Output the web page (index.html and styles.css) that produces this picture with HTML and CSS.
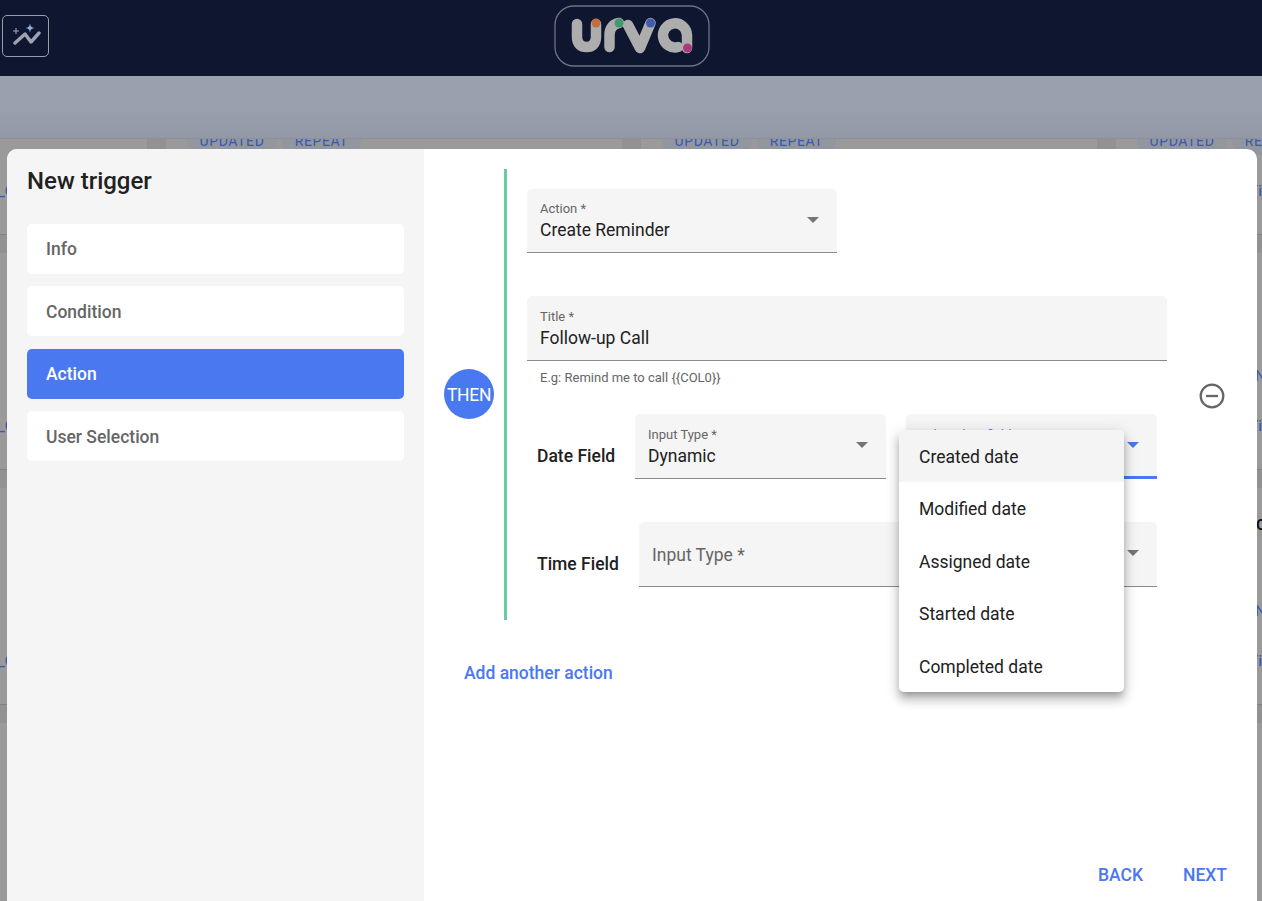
FILE: index.html
```
<!DOCTYPE html>
<html lang="en">
<head>
<meta charset="utf-8">
<title>New trigger</title>
<link rel="stylesheet" href="styles.css">
</head>
<body>
<header class="topbar">
  <button class="spark-btn" type="button" aria-label="Insights">
    <svg width="30" height="26" viewBox="0 0 30 26" class="spark-icon">
      <path d="M4 20 L14 11 L20 19 L28 10" fill="none" stroke="#9ea3b4" stroke-width="3.4" stroke-linecap="round" stroke-linejoin="round"/>
      <path d="M5 5v6M2 8h6" stroke="#8fa4c8" stroke-width="1.1" fill="none"/>
      <path d="M19 0.500 C19.500 3.500 20.500 4.500 23.500 5 C20.500 5.500 19.500 6.500 19 9.500 C18.500 6.500 17.500 5.500 14.500 5 C17.500 4.500 18.500 3.500 19 0.500Z" fill="#8fb0dc"/>
    </svg>
  </button>
  <div class="logo">
    <svg width="156" height="62" viewBox="0 0 156 62">
      <rect x="1" y="1" width="154" height="60" rx="19" fill="none" stroke="#6f7280" stroke-width="1.3"/>
      <g fill="none" stroke="#adadad" stroke-width="10.500" stroke-linecap="round" stroke-linejoin="round">
        <path d="M23 19 V32 C23 39 27 42 32.500 42 C38 42 42 39 42 32 V19"/>
        <path d="M55.500 42 V30 C55.500 23 59 19 65 18"/>
        <path d="M74 20 L86 43 L96.500 18"/>
        <path d="M124 42 A12 12 0 1 1 133 30 V43"/>
      </g>
      <circle cx="42" cy="18" r="4.500" fill="#bf6d41"/>
      <circle cx="65" cy="18" r="4.500" fill="#3f9a6f"/>
      <circle cx="96.500" cy="18" r="4.500" fill="#3e5cb0"/>
      <circle cx="133.500" cy="43" r="4.500" fill="#a83a7c"/>
    </svg>
  </div>
</header>

<div class="scrim-band"></div>

<main class="board">
  <section class="col">
    <div class="card"><div class="chips"><span class="chip">UPDATED</span><span class="chip">REPEAT</span></div><p class="ref ref-left">L_C</p></div>
    <div class="card"><p class="ref ref-left">L_C</p></div>
    <div class="card"><p class="ref ref-left">L_C</p></div>
    <div class="card"></div>
  </section>
  <section class="col">
    <div class="card"><div class="chips"><span class="chip">UPDATED</span><span class="chip">REPEAT</span></div></div>
  </section>
  <section class="col">
    <div class="card"><div class="chips"><span class="chip">UPDATED</span><span class="chip">REPEAT</span></div></div>
  </section>
  <section class="col">
    <div class="card"><div class="chips"><span class="chip">UPDATED</span><span class="chip">REPEAT</span></div><p class="ref">Ti</p></div>
    <div class="card"><p class="vee">N</p><p class="ref">Ti</p></div>
    <div class="card"><p class="oh">Ob</p><p class="vee">N</p><p class="ref">Ti</p></div>
    <div class="card"></div>
  </section>
</main>

<div class="modal">
  <aside class="steps">
    <h2 class="steps-title">New trigger</h2>
    <nav class="step-list">
      <a class="step">Info</a>
      <a class="step">Condition</a>
      <a class="step step-active">Action</a>
      <a class="step">User Selection</a>
    </nav>
  </aside>
  <section class="pane">
    <div class="action-row">
      <div class="then">THEN</div>
      <div class="action-body">
        <div class="field field-action">
          <span class="float">Action *</span>
          <span class="value">Create Reminder</span>
          <span class="caret"></span>
        </div>
        <div class="field field-title">
          <span class="float">Title *</span>
          <span class="value">Follow-up Call</span>
        </div>
        <p class="helper">E.g: Remind me to call {{COL0}}</p>
        <div class="date-row">
          <span class="row-label">Date Field</span>
          <div class="field field-half">
            <span class="float">Input Type *</span>
            <span class="value">Dynamic</span>
            <span class="caret"></span>
          </div>
          <div class="field field-half field-focus">
            <span class="float float-focus">Select date field *</span>
            <span class="value">&nbsp;</span>
            <span class="caret caret-focus"></span>
          </div>
        </div>
        <div class="time-row">
          <span class="row-label">Time Field</span>
          <div class="field field-wide">
            <span class="placeholder">Input Type *</span>
            <span class="caret"></span>
          </div>
        </div>
      </div>
      <svg class="remove" width="28" height="28" viewBox="0 0 28 28" aria-label="Remove">
        <circle cx="14" cy="14" r="11.300" fill="none" stroke="#666" stroke-width="2.300"/>
        <path d="M8 14h12" stroke="#666" stroke-width="2.300"/>
      </svg>
    </div>
    <a class="add-action">Add another action</a>
    <footer class="pane-actions">
      <a class="link-btn">BACK</a>
      <a class="link-btn">NEXT</a>
    </footer>
  </section>
</div>

<ul class="menu">
  <li class="menu-item menu-item-active">Created date</li>
  <li class="menu-item">Modified date</li>
  <li class="menu-item">Assigned date</li>
  <li class="menu-item">Started date</li>
  <li class="menu-item">Completed date</li>
</ul>
</body>
</html>
```
FILE: styles.css
```
* { box-sizing: border-box; }
html, body { height: 100%; }
body {
  margin: 0;
  height: 901px;
  overflow: hidden;
  display: flex;
  flex-direction: column;
  font-family: Roboto, "Liberation Sans", sans-serif;
  background: #999;
  color: #212121;
}
.topbar {
  height: 76px;
  flex: none;
  background: #0f1630;
  position: relative;
  display: flex;
  align-items: flex-start;
  padding: 15px 0 0 2px;
}
.spark-btn {
  width: 47px;
  height: 42px;
  padding: 0;
  background: none;
  border: 1px solid #9a9eab;
  border-radius: 5px;
  display: flex;
  align-items: center;
  justify-content: center;
}
.logo {
  position: absolute;
  left: 554px;
  top: 5px;
  line-height: 0;
}
.scrim-band {
  height: 63px;
  flex: none;
  background: linear-gradient(#9ca1ae 0%, #999fac 55%, #9298a5 100%);
  position: relative;
  z-index: 1;
  border-bottom: 1px solid #8d9098;
}
.board {
  flex: 1;
  min-height: 0;
  overflow: hidden;
  display: grid;
  grid-template-columns: repeat(4, 456px);
  column-gap: 19px;
  margin-left: -309px;
  width: 1900px;
  background: #929292;
}
.col {
  display: flex;
  flex-direction: column;
  gap: 18px;
  margin-top: -14px;
}
.card {
  height: 217px;
  flex: none;
  background: #9a9a9a;
  position: relative;
  padding: 2px 0 0 21px;
  border-bottom: 1px solid #828282;
}
.col > .card:first-child { height: 110px; }
.chips {
  display: flex;
  gap: 5px;
  height: 24px;
}
.chip {
  height: 28px;
  background: #92969f;
  color: #3a58b0;
  border-radius: 14px;
  font-size: 14px;
  line-height: 28px;
  letter-spacing: 0.6px;
  text-align: center;
}
.chip:first-child { width: 90px; }
.chip:last-child { width: 79px; }
.ref {
  margin: 0;
  position: absolute;
  left: 133px;
  bottom: 35px;
  color: #3a58b4;
  font-size: 15px;
  font-weight: 500;
  line-height: 16px;
  white-space: nowrap;
}
.ref-left { left: 299px; }
.vee {
  margin: 0;
  position: absolute;
  left: 139px;
  bottom: 85px;
  color: #3a58b4;
  font-size: 15px;
  line-height: 16px;
}
.oh {
  margin: 0;
  position: absolute;
  left: 140px;
  bottom: 170px;
  color: #111;
  font-size: 15px;
  line-height: 18px;
  font-weight: 700;
}
.modal {
  position: absolute;
  left: 7px;
  top: 149px;
  width: 1250px;
  height: 752px;
  background: #fff;
  border-radius: 10px 10px 0 0;
  overflow: hidden;
  display: flex;
}
.steps {
  width: 417px;
  flex: none;
  background: #f5f5f5;
  padding: 16px 20px 0;
}
.steps-title {
  margin: 0 0 27px;
  font-size: 24px;
  line-height: 32px;
  font-weight: 500;
  color: #212121;
}
.step-list {
  display: flex;
  flex-direction: column;
  gap: 12.400px;
}
.step {
  height: 50px;
  background: #fff;
  border-radius: 5px;
  padding-left: 19px;
  font-size: 17.500px;
  font-weight: 500;
  line-height: 50px;
  color: #666;
}
.step:nth-child(even) { line-height: 52px; }
.step-active {
  background: #4a78f0;
  color: #fff;
}
.pane {
  flex: 1;
  position: relative;
  padding: 20px 0 0 20px;
}
.action-row {
  display: flex;
  align-items: center;
}
.then {
  width: 50px;
  height: 50px;
  flex: none;
  margin-top: -1px;
  border-radius: 50%;
  background: #4a78f0;
  color: #fff;
  font-size: 17.500px;
  text-align: center;
  line-height: 52px;
  letter-spacing: -0.300px;
}
.action-body {
  width: 663px;
  margin-left: 10px;
  flex: none;
  border-left: 3px solid #66cda3;
  padding: 20px 0 33px 20px;
}
.remove {
  margin-left: 31px;
  margin-top: 3px;
}
.field {
  position: relative;
  background: #f5f5f5;
  border-radius: 5px 5px 0 0;
  border-bottom: 1px solid #8a8a8a;
  height: 65px;
  padding: 12px 13px 0;
  display: flex;
  flex-direction: column;
}
.field-action { width: 310px; height: 64px; }
.field-title { width: 640px; margin-top: 43px; padding-top: 13px; }
.float {
  font-size: 13px;
  line-height: 16px;
  color: #666;
}
.float-focus { color: #4a78f0; }
.value {
  font-size: 17.500px;
  line-height: 26px;
  color: #212121;
}
.caret {
  position: absolute;
  right: 18px;
  top: 28px;
  width: 0;
  height: 0;
  border-left: 6px solid transparent;
  border-right: 6px solid transparent;
  border-top: 6px solid #757575;
}
.caret-focus { border-top-color: #4a78f0; }
.helper {
  margin: 9px 0 0 13px;
  font-size: 13px;
  line-height: 16px;
  color: #666;
}
.date-row {
  display: flex;
  align-items: center;
  margin-top: 28px;
  padding-left: 10px;
}
.time-row {
  display: flex;
  align-items: center;
  margin-top: 43px;
  padding-left: 10px;
}
.row-label {
  font-size: 17.500px;
  font-weight: 500;
  color: #212121;
  white-space: nowrap;
  margin-top: 18px;
  margin-right: 20px;
}
.date-row .row-label { width: 78px; }
.time-row .row-label { width: 82px; }
.field-half { width: 251px; padding-top: 13px; }
.field-focus { margin-left: 20px; border-bottom: 3px solid #4a78f0; }
.field-wide { width: 518px; justify-content: center; padding: 2px 13px 0; }
.placeholder {
  font-size: 17.500px;
  color: #666;
}
.add-action {
  display: block;
  margin: 41px 0 0 20px;
  font-size: 17.500px;
  font-weight: 500;
  color: #4a78f0;
  line-height: 24px;
}
.pane-actions {
  position: absolute;
  right: 30px;
  bottom: 14px;
  display: flex;
  gap: 40px;
}
.link-btn {
  font-size: 17.500px;
  font-weight: 500;
  line-height: 24px;
  color: #4a78f0;
}
.menu {
  position: absolute;
  left: 899px;
  top: 430px;
  width: 225px;
  height: 262px;
  margin: 0;
  padding: 0;
  list-style: none;
  background: #fff;
  border-radius: 5px;
  overflow: hidden;
  box-shadow: 0 5px 6px -3px rgba(0,0,0,.25), 0 8px 10px 1px rgba(0,0,0,.16), 0 3px 14px 2px rgba(0,0,0,.12);
}
.menu-item {
  height: 52.400px;
  padding-left: 20px;
  font-size: 17.500px;
  line-height: 54.400px;
  color: #212121;
}
.menu-item-active { background: #f4f4f4; }
```
